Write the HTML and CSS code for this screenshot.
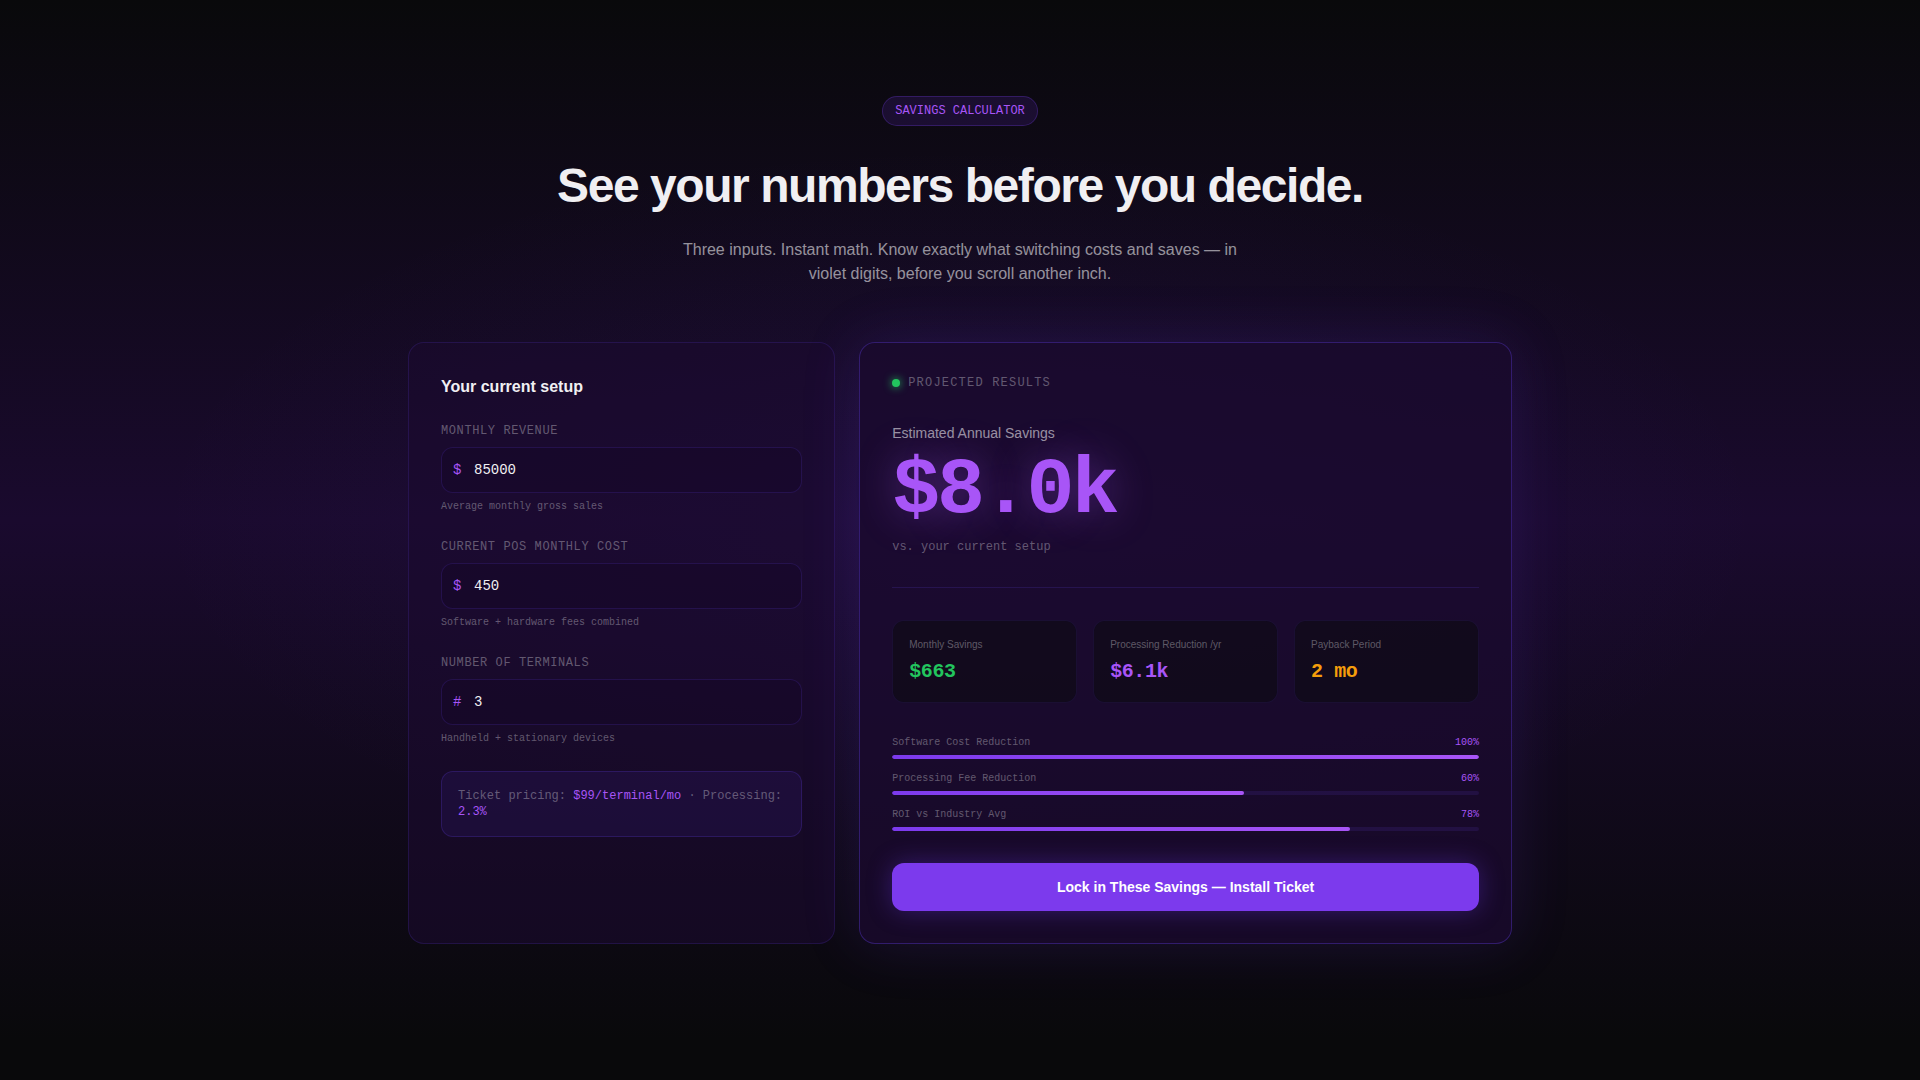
FILE: index.html
```html
<!DOCTYPE html>
<html lang="en">
<head>
<meta charset="utf-8">
<meta name="viewport" content="width=device-width, initial-scale=1">
<title>Savings Calculator</title>
<link rel="stylesheet" href="styles.css">
</head>
<body>
<section class="calculator">
  <div class="container">
    <header class="intro">
      <span class="pill">Savings Calculator</span>
      <h1 class="headline">See your numbers before you decide.</h1>
      <p class="lead">Three inputs. Instant math. Know exactly what switching costs and saves — in violet digits, before you scroll another inch.</p>
    </header>

    <div class="panels">
      <form class="card setup">
        <h2 class="setup-title">Your current setup</h2>
        <div class="field">
          <label class="field-label" for="revenue">Monthly Revenue</label>
          <div class="field-box">
            <span class="field-prefix">$</span>
            <input class="field-input" id="revenue" type="text" inputmode="numeric" value="85000">
          </div>
          <p class="field-hint">Average monthly gross sales</p>
        </div>
        <div class="field">
          <label class="field-label" for="pos-cost">Current POS Monthly Cost</label>
          <div class="field-box">
            <span class="field-prefix">$</span>
            <input class="field-input" id="pos-cost" type="text" inputmode="numeric" value="450">
          </div>
          <p class="field-hint">Software + hardware fees combined</p>
        </div>
        <div class="field">
          <label class="field-label" for="terminals">Number of Terminals</label>
          <div class="field-box">
            <span class="field-prefix">#</span>
            <input class="field-input" id="terminals" type="text" inputmode="numeric" value="3">
          </div>
          <p class="field-hint">Handheld + stationary devices</p>
        </div>
        <p class="pricing">Ticket pricing: <span class="accent">$99/terminal/mo</span> · Processing: <span class="accent">2.3%</span></p>
      </form>

      <div class="card results">
        <div class="status"><span class="status-dot"></span>Projected Results</div>
        <div class="total">
          <p class="total-label">Estimated Annual Savings</p>
          <p class="total-value">$8.0k</p>
          <p class="total-note">vs. your current setup</p>
        </div>
        <div class="stats">
          <div class="stat">
            <p class="stat-label">Monthly Savings</p>
            <p class="stat-value green">$663</p>
          </div>
          <div class="stat">
            <p class="stat-label">Processing Reduction /yr</p>
            <p class="stat-value violet">$6.1k</p>
          </div>
          <div class="stat">
            <p class="stat-label">Payback Period</p>
            <p class="stat-value amber">2 mo</p>
          </div>
        </div>
        <div class="bars">
          <div class="bar">
            <div class="bar-head"><span>Software Cost Reduction</span><span class="accent">100%</span></div>
            <div class="bar-track"><div class="bar-fill" style="width: 100%"></div></div>
          </div>
          <div class="bar">
            <div class="bar-head"><span>Processing Fee Reduction</span><span class="accent">60%</span></div>
            <div class="bar-track"><div class="bar-fill" style="width: 60%"></div></div>
          </div>
          <div class="bar">
            <div class="bar-head"><span>ROI vs Industry Avg</span><span class="accent">78%</span></div>
            <div class="bar-track"><div class="bar-fill" style="width: 78%"></div></div>
          </div>
        </div>
        <button class="cta" type="button">Lock in These Savings — Install Ticket</button>
      </div>
    </div>
  </div>
</section>
</body>
</html>
```

FILE: styles.css
```css
:root {
  --ink: #09090b;
  --violet: #7c3aed;
  --violet-light: #a855f7;
  --text: #f0eff2;
  --muted: rgba(240, 239, 242, 0.6);
  --faint: rgba(240, 239, 242, 0.35);
  --sans: "Liberation Sans", Arial, sans-serif;
  --mono: "Liberation Mono", "Courier New", monospace;
}

* {
  box-sizing: border-box;
}

body {
  margin: 0;
  background: var(--ink);
  color: var(--text);
  font-family: var(--sans);
  font-size: 16px;
  line-height: 24px;
}

h1, h2, p {
  margin: 0;
}

.calculator {
  padding: 96px 0;
  background:
    radial-gradient(ellipse 42% 36% at 50% 50%, rgba(109, 58, 237, 0.08), transparent 100%),
    linear-gradient(180deg, #09090b 0%, #1a0a2e 50%, #09090b 100%);
}

.container {
  max-width: 1152px;
  margin: 0 auto;
  padding: 0 24px;
}

.intro {
  display: flex;
  flex-direction: column;
  align-items: center;
  margin-bottom: 56px;
  text-align: center;
}

.pill {
  margin-bottom: 32px;
  padding: 6px 12px;
  border: 1px solid rgba(109, 58, 220, 0.3);
  border-radius: 16px;
  background: rgba(109, 48, 220, 0.15);
  color: var(--violet-light);
  font-family: var(--mono);
  font-size: 12px;
  line-height: 16px;
  text-transform: uppercase;
}

.headline {
  margin-bottom: 24px;
  font-size: 48px;
  font-weight: 700;
  line-height: 56px;
  letter-spacing: -0.03em;
}

.lead {
  max-width: 576px;
  color: var(--muted);
}

.panels {
  display: grid;
  grid-template-columns: repeat(5, minmax(0, 1fr));
  gap: 24px;
}

.card {
  padding: 32px;
  border: 1px solid rgba(91, 58, 210, 0.2);
  border-radius: 16px;
}

.setup {
  grid-column: span 2;
  background: rgba(26, 10, 46, 0.6);
}

.results {
  grid-column: span 3;
  border-color: rgba(91, 58, 210, 0.4);
  background: rgba(26, 10, 46, 0.8);
  box-shadow: 0 0 60px rgba(109, 58, 237, 0.15);
}

.setup-title {
  margin-bottom: 24px;
  font-size: 16px;
  line-height: 24px;
}

.field {
  margin-bottom: 24px;
}

.field-label {
  display: block;
  margin-bottom: 8px;
  color: var(--faint);
  font-family: var(--mono);
  font-size: 12px;
  line-height: 16px;
  letter-spacing: 0.05em;
  text-transform: uppercase;
}

.field-box {
  position: relative;
}

.field-prefix {
  position: absolute;
  top: 13px;
  left: 12px;
  color: var(--violet-light);
  font-family: var(--mono);
  font-size: 14px;
  line-height: 20px;
}

.field-input {
  display: block;
  width: 100%;
  height: 46px;
  padding: 12px 16px 12px 32px;
  border: 1px solid rgba(91, 58, 210, 0.2);
  border-radius: 12px;
  outline: none;
  background: rgba(20, 6, 38, 0.4);
  color: var(--text);
  font-family: var(--mono);
  font-size: 14px;
  line-height: 20px;
}

.field-input:focus {
  border-color: var(--violet);
}

.field-hint {
  margin-top: 6px;
  color: var(--faint);
  font-family: var(--mono);
  font-size: 10px;
  line-height: 16px;
}

.pricing {
  padding: 16px;
  border: 1px solid rgba(91, 58, 210, 0.25);
  border-radius: 12px;
  background: rgba(91, 48, 220, 0.1);
  color: var(--faint);
  font-family: var(--mono);
  font-size: 12px;
  line-height: 16px;
}

.accent {
  color: var(--violet-light);
}

.status {
  display: flex;
  align-items: center;
  gap: 8px;
  margin-bottom: 32px;
  color: var(--faint);
  font-family: var(--mono);
  font-size: 12px;
  line-height: 16px;
  letter-spacing: 0.1em;
  text-transform: uppercase;
}

.status-dot {
  width: 8px;
  height: 8px;
  border-radius: 50%;
  background: #22c55e;
  box-shadow: 0 0 8px #22c55e;
}

.total {
  padding-bottom: 32px;
  border-bottom: 1px solid rgba(91, 58, 210, 0.2);
}

.total-label {
  color: var(--muted);
  font-size: 14px;
  line-height: 20px;
}

.total-value {
  margin: 8px 0;
  color: var(--violet-light);
  font-family: var(--mono);
  font-size: 80px;
  font-weight: 700;
  line-height: 80px;
  letter-spacing: -0.04em;
  text-shadow: 0 0 40px rgba(168, 85, 247, 0.4);
}

.total-note {
  color: var(--faint);
  font-family: var(--mono);
  font-size: 12px;
  line-height: 16px;
}

.stats {
  display: grid;
  grid-template-columns: repeat(3, minmax(0, 1fr));
  gap: 16px;
  margin: 32px 0;
}

.stat {
  padding: 16px;
  border: 1px solid rgba(91, 58, 210, 0.12);
  border-radius: 12px;
  background: rgba(9, 9, 11, 0.5);
}

.stat-label {
  margin-bottom: 6px;
  color: var(--faint);
  font-size: 10px;
  line-height: 15px;
}

.stat-value {
  font-family: var(--mono);
  font-size: 20px;
  font-weight: 700;
  line-height: 28px;
  letter-spacing: -0.02em;
}

.green {
  color: #22c55e;
}

.violet {
  color: var(--violet-light);
}

.amber {
  color: #f59e0b;
}

.bars {
  display: grid;
  gap: 12px;
  margin-bottom: 32px;
}

.bar-head {
  display: flex;
  justify-content: space-between;
  margin-bottom: 4px;
  color: var(--faint);
  font-family: var(--mono);
  font-size: 10px;
  line-height: 16px;
}

.bar-track {
  height: 4px;
  overflow: hidden;
  border-radius: 2px;
  background: rgba(91, 58, 210, 0.15);
}

.bar-fill {
  height: 100%;
  border-radius: 2px;
  background: linear-gradient(90deg, var(--violet), var(--violet-light));
}

.cta {
  display: block;
  width: 100%;
  padding: 14px 24px;
  border: 0;
  border-radius: 12px;
  background: var(--violet);
  box-shadow: 0 0 24px rgba(109, 58, 237, 0.35);
  color: #fff;
  font-family: var(--sans);
  font-size: 14px;
  font-weight: 700;
  line-height: 20px;
  cursor: pointer;
}
```
